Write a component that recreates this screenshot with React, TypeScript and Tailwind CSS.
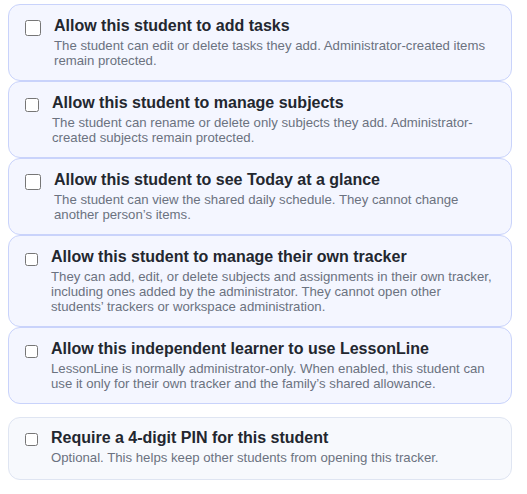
import React from 'react';

type Option = {
  title: string;
  text: string;
  box: string;
  muted?: boolean;
};

const options: Option[] = [
  {
    title: 'Allow this student to add tasks',
    text: 'The student can edit or delete tasks they add. Administrator-created items remain protected.',
    box: 'h-4 w-4 mt-1',
  },
  {
    title: 'Allow this student to manage subjects',
    text: 'The student can rename or delete only subjects they add. Administrator-created subjects remain protected.',
    box: 'h-[14px] w-[14px] mt-[5px]',
  },
  {
    title: 'Allow this student to see Today at a glance',
    text: 'The student can view the shared daily schedule. They cannot change another person\u2019s items.',
    box: 'h-4 w-4 mt-1',
  },
  {
    title: 'Allow this student to manage their own tracker',
    text: 'They can add, edit, or delete subjects and assignments in their own tracker, including ones added by the administrator. They cannot open other students\u2019 trackers or workspace administration.',
    box: 'h-[13px] w-[13px] mt-[6px]',
  },
  {
    title: 'Allow this independent learner to use LessonLine',
    text: 'LessonLine is normally administrator-only. When enabled, this student can use it only for their own tracker and the family\u2019s shared allowance.',
    box: 'h-[13px] w-[13px] mt-[6px]',
  },
];

const Row: React.FC<Option> = ({ title, text, box, muted }) => (
  <label
    className={
      muted
        ? 'flex gap-[13px] rounded-xl border border-[#dfe5f2] bg-[#f7f9fd] px-4 pt-[10px] pb-[14px]'
        : 'flex gap-[13px] rounded-xl border border-[#c9d3fb] bg-[#f4f6ff] px-4 pt-[11px] pb-3'
    }
  >
    <input type="checkbox" className={`${box} shrink-0`} />
    <span className="flex flex-col">
      <span className="text-[16px] leading-5 font-bold text-[#23272f]">{title}</span>
      <span className="mt-[2px] text-[13.2px] leading-[15px] text-[#6b7280]">{text}</span>
    </span>
  </label>
);

export default function App() {
  return (
    <div className="min-h-screen bg-white font-['Liberation_Sans',Arial,sans-serif]">
      <div className="ml-2 w-[504px] pt-1">
        <div className="flex flex-col">
          {options.map((o) => (
            <Row key={o.title} {...o} />
          ))}
        </div>
        <div className="mt-[13px]">
          <Row
            title="Require a 4-digit PIN for this student"
            text="Optional. This helps keep other students from opening this tracker."
            box="h-[13px] w-[13px] mt-[5px]"
            muted
          />
        </div>
      </div>
    </div>
  );
}
